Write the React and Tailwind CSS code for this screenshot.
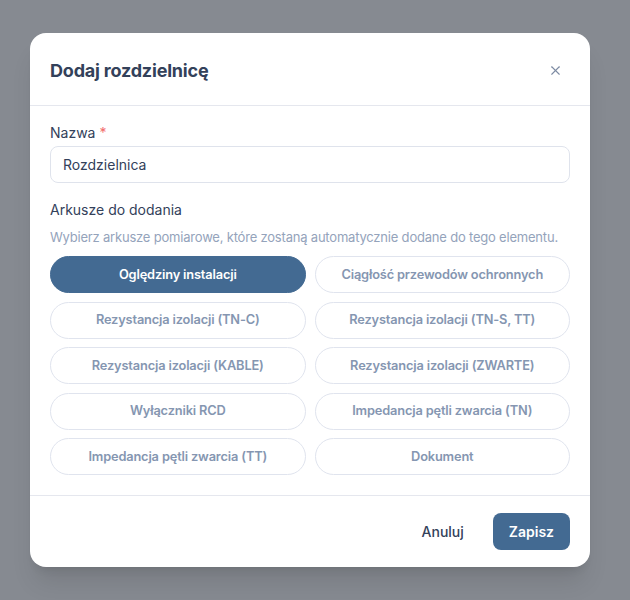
import { X } from 'lucide-react';

const SHEETS = [
  'Oględziny instalacji',
  'Ciągłość przewodów ochronnych',
  'Rezystancja izolacji (TN-C)',
  'Rezystancja izolacji (TN-S, TT)',
  'Rezystancja izolacji (KABLE)',
  'Rezystancja izolacji (ZWARTE)',
  'Wyłączniki RCD',
  'Impedancja pętli zwarcia (TN)',
  'Impedancja pętli zwarcia (TT)',
  'Dokument',
];

export default function App() {
  const selected = ['Oględziny instalacji'];

  return (
    <div
      className="min-h-[600px] w-[630px] bg-[#868a91] pl-[30px] pt-[33px] pb-[34px]"
      style={{ fontFamily: 'Inter, "Noto Sans", sans-serif' }}
    >
      <div className="w-[560px] bg-white rounded-2xl overflow-hidden shadow-xl">
        {/* header */}
        <div className="h-[73px] px-5 pt-[2px] flex items-center justify-between border-b border-[#e5e7ee]">
          <h2 className="text-[18px] font-bold text-[#33415a] tracking-[-0.2px]">Dodaj rozdzielnicę</h2>
          <button className="w-8 h-8 flex items-center justify-center text-[#7d8ba3] mr-[-1px]">
            <X className="w-[15px] h-[15px]" strokeWidth={1.8} />
          </button>
        </div>

        {/* body */}
        <div className="px-5 pt-[17px] pb-5">
          <label className="block text-sm leading-5 text-[#33415a] mb-[3px]">
            Nazwa <span className="text-[#f26d6d]">*</span>
          </label>
          <div className="h-[37px] border border-[#dfe3ec] rounded-lg px-3 flex items-center text-sm text-[#33415a]">
            Rozdzielnica
          </div>

          <p className="mt-[17px] text-sm leading-5 text-[#33415a]">Arkusze do dodania</p>
          <p className="mt-[7px] text-[13px] tracking-[-0.2px] leading-5 text-[#94a3bb] whitespace-nowrap">
            Wybierz arkusze pomiarowe, które zostaną automatycznie dodane do tego elementu.
          </p>

          <div className="mt-[9px] grid grid-cols-2 gap-x-[9px] gap-y-[8.5px]">
            {SHEETS.map((name) => {
              const active = selected.includes(name);
              return (
                <button
                  key={name}
                  className={`h-[37px] rounded-full text-[12.8px] tracking-[-0.15px] font-semibold flex items-center justify-center ${
                    active
                      ? 'bg-[#436a92] text-white border border-[#436a92]'
                      : 'bg-white text-[#8596b1] border border-[#e0e4ee]'
                  }`}
                >
                  {name}
                </button>
              );
            })}
          </div>
        </div>

        {/* footer */}
        <div className="h-[72px] px-5 border-t border-[#e5e7ee] flex items-center justify-end gap-[29px]">
          <button className="text-sm font-medium text-[#33415a]">Anuluj</button>
          <button className="h-[37px] px-[16px] rounded-lg bg-[#436a92] text-white text-sm font-semibold">
            Zapisz
          </button>
        </div>
      </div>
    </div>
  );
}
